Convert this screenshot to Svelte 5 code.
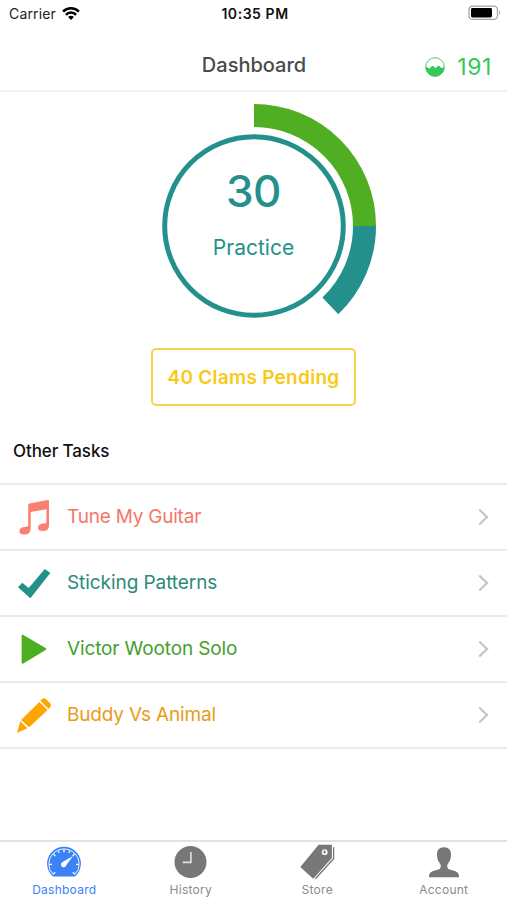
<script>
  let clams = 191;
  let pending = 40;
  let current = { minutes: 30, name: "Practice" };

  let tasks = [
    { name: "Tune My Guitar", icon: "music", color: "#fa8072", text: "#f4776a", spacing: -0.22 },
    { name: "Sticking Patterns", icon: "check", color: "#23908a", text: "#2c8a78", spacing: -0.07 },
    { name: "Victor Wooton Solo", icon: "play", color: "#4caf21", text: "#459f2b", spacing: -0.13 },
    { name: "Buddy Vs Animal", icon: "pencil", color: "#ffa500", text: "#e79d17", spacing: -0.18 },
  ];

  let tabs = [
    { name: "Dashboard", icon: "gauge" },
    { name: "History", icon: "clock" },
    { name: "Store", icon: "tag" },
    { name: "Account", icon: "person" },
  ];
  let active = "Dashboard";

  // degrees, clockwise from 12 o'clock
  let segments = [
    { from: 0, to: 90, color: "#4fae22" },
    { from: 90, to: 136.3, color: "#23908c" },
  ];

  function point(angle, radius) {
    const rad = (angle * Math.PI) / 180;
    return `${125 + radius * Math.sin(rad)} ${125 - radius * Math.cos(rad)}`;
  }

  function arc({ from, to }) {
    return `M${point(from, 110.5)} A110.5 110.5 0 0 1 ${point(to, 110.5)}`;
  }
</script>

<main>
  <div class="status">
    <div class="carrier">
      <span>Carrier</span>
      <svg width="18" height="13" viewBox="0 0 18 13">
        <g fill="none" stroke="#000" stroke-width="2.5">
          <path d="M1.1 4.6 A11 11 0 0 1 16.9 4.6" />
          <path d="M3.9 7.8 A7 7 0 0 1 14.1 7.8" />
        </g>
        <path d="M9 13 L6.1 10.1 A3.9 3.9 0 0 1 11.9 10.1 Z" />
      </svg>
    </div>
    <span class="time">10:35 PM</span>
    <svg class="battery" width="33" height="16" viewBox="0 0 33 16">
      <rect x="1" y="1.2" width="28.5" height="13.2" rx="3.6" fill="none" stroke="#a5a5a5" stroke-width="1.3" />
      <rect x="3" y="3.1" width="21" height="9.4" rx="1.4" />
      <path d="M31 5.5 Q33 7.8 31 10 Z" fill="#999" />
    </svg>
  </div>

  <header>
    <h1>Dashboard</h1>
    <div class="clams">
      <svg width="20" height="20" viewBox="0 0 20 20">
        <circle cx="10" cy="10" r="9.3" fill="none" stroke="#35c759" stroke-width="0.9" />
        <path
          d="M.5 10 Q2 9.9 3.2 11 Q4.5 12.2 5.8 10.3 Q7.6 7.7 9.4 10 Q10.7 11.7 12 10.1 Q13.6 7.7 15.3 10 Q16.8 12 19.5 10 A9.5 9.5 0 0 1 .5 10Z"
          fill="#35c759"
        />
      </svg>
      <span>{clams}</span>
    </div>
  </header>

  <section class="current">
    <svg class="ring" width="250" height="250" viewBox="0 0 250 250">
      <circle cx="125" cy="125" r="89.3" fill="none" stroke="#23908c" stroke-width="5" />
      {#each segments as segment}
        <path d={arc(segment)} fill="none" stroke={segment.color} stroke-width="23" />
      {/each}
    </svg>
    <div class="label">
      <strong>{current.minutes}</strong>
      <span>{current.name}</span>
    </div>
  </section>

  <button class="pending">{pending} Clams Pending</button>

  <h2>Other Tasks</h2>
  <ul>
    {#each tasks as task}
      <li>
        <svg class="icon" width="36" height="36" viewBox="0 0 36 36" fill={task.color}>
          {#if task.icon == "music"}
            <path
              d="M12.2 6 Q12.2 4.7 13.5 4.4 L31.5 1.1 Q33 .9 33 2.3 V26.5 Q33 32 26.7 32 Q22 32 22 28.8 Q22 25.2 26.7 24.6 Q30.4 24.4 30.4 22.9 V10.2 L14.7 13.1 V29.7 Q14.7 35.5 8.3 35.5 Q3.4 35.5 3.4 32.3 Q3.4 28.7 8.1 28.1 Q12.2 27.8 12.2 26Z"
            />
          {:else if task.icon == "check"}
            <path d="M2 22.3 L6.3 17.8 L12.7 23 L28.8 4 L34.3 7.9 L14.4 33.3Z" />
          {:else if task.icon == "play"}
            <path d="M5.6 4.9 Q5.6 3 7.3 3.9 L29.6 17 Q31 18 29.6 19 L7.3 32.4 Q5.6 33.2 5.6 31.5Z" />
          {:else}
            <path
              d="M26 2.2 Q28 .4 30 2.2 L34.3 6.5 Q36 8.3 34.2 10.2 L32.6 11.9 L24.4 3.8ZM23.4 4.9 L31.6 12.9 L13.1 30.3 L5.1 23ZM4.3 24.2 L11.4 31.2 L1 36Z"
            />
          {/if}
        </svg>
        <span style:color={task.text} style:letter-spacing="{task.spacing}px">{task.name}</span>
        <svg class="chevron" width="12" height="18" viewBox="0 0 12 18">
          <path d="M1.2 1.5 L9 9 L1.2 16.5" fill="none" stroke="#c7c7cb" stroke-width="2.4" />
        </svg>
      </li>
    {/each}
  </ul>

  <nav>
    {#each tabs as tab}
      <a href="#{tab.name}" class:active={tab.name == active}>
        <svg width="36" height="36" viewBox="0 0 36 36" fill="currentColor">
          {#if tab.icon == "gauge"}
            <path d="M7.1 32.5 A16.9 16.9 0 1 1 28.9 32.5Z" />
            <g fill="none" stroke="#fff">
              <path d="M6.8 30.3 A15.2 15.2 0 1 1 29.2 30.3" stroke-width="0.9" />
              <path
                d="M6.8 30.3 L9.3 28.3 M29.2 30.3 L26.7 28.3 M3.2 20.4 H6 M30 20.4 H32.8 M7.5 10 L9.4 12 M28.5 10 L26.6 12 M18 5.5 V8.3 M12.2 6.7 L13.1 8.8 M23.8 6.7 L22.9 8.8"
                stroke-width="1.3"
              />
            </g>
            <path d="M27 12 L20.5 20.8 A2.8 2.8 0 1 1 16.6 18Z" fill="#fff" />
          {:else if tab.icon == "clock"}
            <circle cx="17.5" cy="18" r="16" />
            <path d="M17.9 8 V18.4 H9.9" fill="none" stroke="#e4e4e4" stroke-width="1.6" />
          {:else if tab.icon == "tag"}
            <path
              fill-rule="evenodd"
              d="M19.6 .8 H32.9 V14 L14.2 34.7 L1.3 23Z M25.7 5.3 A2.9 2.9 0 1 0 25.7 11.1 A2.9 2.9 0 1 0 25.7 5.3Z"
            />
            <ellipse cx="25.6" cy="8" rx="1.1" ry="1.8" />
            <path d="M34.6 3.2 V14.7 L16.4 34.7" fill="none" stroke="currentColor" stroke-width="1.3" />
          {:else}
            <path
              d="M18 3.2 C13 3.2 10.8 6.4 11 11.2 C11.2 15.2 12.3 17.5 14 19.6 C15.2 21.2 15 24 13.6 25 C10.8 26.5 3 26.6 3 32 V33.2 H33 V32 C33 26.6 25.2 26.5 22.4 25 C21 24 20.8 21.2 22 19.6 C23.7 17.5 24.8 15.2 25 11.2 C25.2 6.4 23 3.2 18 3.2Z"
            />
          {/if}
        </svg>
        <span>{tab.name}</span>
      </a>
    {/each}
  </nav>
</main>

<style>
  :global(body) {
    background: #fff;
  }
  main {
    display: flex;
    flex-direction: column;
    width: 507px;
    height: 900px;
    overflow: hidden;
    font-family: Inter, "Liberation Sans", sans-serif;
    color: #111;
  }
  .status {
    display: grid;
    grid-template-columns: 1fr auto 1fr;
    align-items: center;
    height: 28px;
    padding: 0 6px 2px 9px;
    box-sizing: border-box;
    font-size: 14px;
  }
  .carrier {
    display: flex;
    align-items: center;
    gap: 6px;
    letter-spacing: 0.15px;
    color: #222;
  }
  .time {
    font-size: 14px;
    font-weight: 600;
    letter-spacing: 0.55px;
  }
  .battery {
    justify-self: end;
  }
  header {
    display: grid;
    grid-template-columns: 1fr auto 1fr;
    align-items: center;
    height: 64px;
    padding: 12px 15px 0 16px;
    box-sizing: border-box;
    border-bottom: 2px solid #f1f1f1;
  }
  h1 {
    grid-column: 2;
    margin: 0;
    font-size: 20px;
    font-weight: 500;
    color: #4a4a4a;
  }
  .clams {
    display: flex;
    justify-content: flex-end;
    align-items: center;
    gap: 12px;
    padding-top: 3px;
    font-size: 23px;
    letter-spacing: 0.6px;
    color: #35c759;
  }
  .current {
    display: grid;
    justify-content: center;
    height: 250px;
    margin-top: 8.5px;
  }
  .ring,
  .label {
    grid-area: 1 / 1;
  }
  .label {
    display: flex;
    flex-direction: column;
    align-items: center;
    padding-top: 63px;
    color: #23908c;
  }
  .label strong {
    font-size: 44px;
    font-weight: 500;
    line-height: 54px;
    letter-spacing: -0.4px;
  }
  .label span {
    margin-top: 17px;
    font-size: 21px;
    line-height: 26px;
  }
  .pending {
    align-self: center;
    width: 205px;
    height: 58px;
    margin-top: -3px;
    padding: 2px 0 0;
    border: 2px solid #fbd34b;
    border-radius: 5px;
    background: #fff;
    font-family: inherit;
    font-size: 19px;
    font-weight: 600;
    letter-spacing: 0.28px;
    color: #fac815;
  }
  h2 {
    margin: 34px 0 0 13px;
    font-size: 17px;
    font-weight: 500;
    line-height: 22px;
    letter-spacing: -0.1px;
  }
  ul {
    margin: 21px 0 0;
    padding: 0;
    list-style: none;
    border-top: 2px solid #ebebeb;
  }
  li {
    display: flex;
    align-items: center;
    height: 66px;
    padding: 0 17px 0 16px;
    box-sizing: border-box;
    border-bottom: 2px solid #ebebeb;
    font-size: 19px;
  }
  li span {
    flex: 1;
    margin-left: 15px;
  }
  nav {
    display: flex;
    justify-content: space-between;
    height: 60px;
    margin-top: auto;
    padding-left: 1px;
    box-sizing: border-box;
    border-top: 2px solid #e2e2e2;
  }
  nav a {
    display: flex;
    flex: 1;
    flex-direction: column;
    align-items: center;
    padding-top: 2px;
    font-size: 12px;
    line-height: 16px;
    color: #777;
    text-decoration: none;
  }
  nav span {
    margin-top: 2px;
    letter-spacing: 0.25px;
    color: #8b8b8b;
  }
  nav .active,
  nav .active span {
    color: #3b82f7;
  }
</style>
